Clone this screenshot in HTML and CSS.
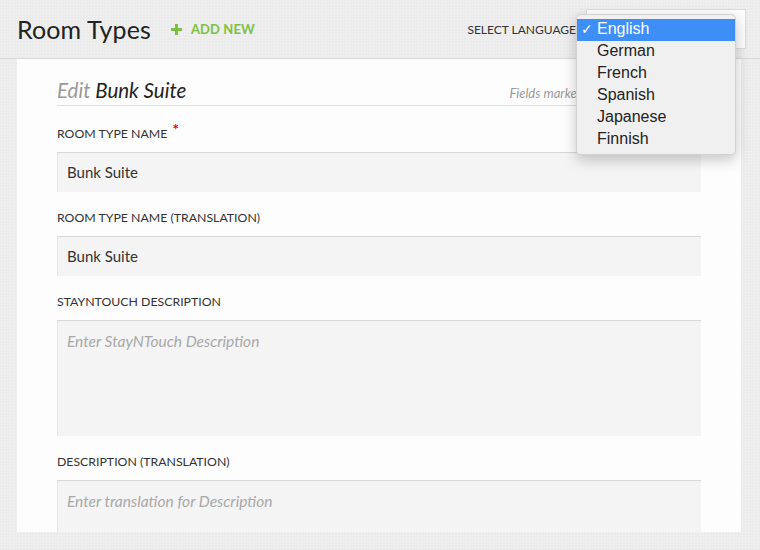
FILE: index.html
```html
<!DOCTYPE html>
<html>
<head>
<meta charset="utf-8">
<link rel="stylesheet" href="styles.css">
</head>
<body>
<div class="page">
  <header class="topbar">
    <h1 class="title">Room Types</h1>
    <a class="add-new">
      <svg class="plus" width="11" height="11" viewBox="0 0 11 11"><rect x="4" y="0" width="3" height="11" fill="#7cc142"/><rect x="0" y="4" width="11" height="3" fill="#7cc142"/></svg>
      <span>ADD NEW</span>
    </a>
    <div class="spacer"></div>
    <span class="lang-label">SELECT LANGUAGE</span>
    <div class="lang-select">
      <ul class="lang-menu">
        <li class="selected"><span class="check">✓</span>English</li>
        <li>German</li>
        <li>French</li>
        <li>Spanish</li>
        <li>Japanese</li>
        <li>Finnish</li>
      </ul>
    </div>
  </header>
  <main class="panel">
    <span class="tab-marker"></span>
    <div class="heading">
      <h2 class="heading-title"><span class="edit">Edit</span> Bunk Suite</h2>
      <span class="note">Fields marked with * are mandatory</span>
    </div>
    <div class="field">
      <label class="label">ROOM TYPE NAME <span class="req">*</span></label>
      <div class="input">Bunk Suite</div>
    </div>
    <div class="field">
      <label class="label">ROOM TYPE NAME (TRANSLATION)</label>
      <div class="input">Bunk Suite</div>
    </div>
    <div class="field">
      <label class="label">STAYNTOUCH DESCRIPTION</label>
      <div class="textarea placeholder">Enter StayNTouch Description</div>
    </div>
    <div class="field">
      <label class="label">DESCRIPTION (TRANSLATION)</label>
      <div class="textarea placeholder">Enter translation for Description</div>
    </div>
  </main>
</div>
</body>
</html>
```

FILE: styles.css
```css
html, body {
  margin: 0;
  padding: 0;
}
body {
  width: 760px;
  height: 550px;
  overflow: hidden;
  background-color: #ececec;
  background-image: radial-gradient(circle, #f5f5f5 0.8px, transparent 1px);
  background-size: 3px 3px;
  font-family: Lato, "Open Sans", sans-serif;
  color: #333;
}
.page {
  width: 760px;
}
.topbar {
  height: 58px;
  border-bottom: 1px solid #d9d9d9;
  display: flex;
  align-items: center;
  position: relative;
}
.title {
  margin: 0 0 0 17px;
  font-size: 25px;
  font-weight: 400;
  color: #222;
  letter-spacing: 0.1px;
}
.add-new {
  display: flex;
  align-items: center;
  margin-left: 20px;
  color: #7cc142;
  font-weight: 700;
  font-size: 13px;
  letter-spacing: 0.1px;
}
.plus {
  margin-right: 9px;
}
.spacer {
  flex: 1;
}
.lang-label {
  font-size: 12px;
  color: #333;
  margin-right: 10px;
}
.lang-select {
  width: 160px;
  height: 40px;
  box-sizing: border-box;
  background: #fdfdfd;
  border: 1px solid #dcdcdc;
  margin-right: 14px;
  position: relative;
}
.lang-menu {
  position: absolute;
  left: -11px;
  top: 4px;
  width: 160px;
  margin: 0;
  padding: 4px 0 3px;
  list-style: none;
  background: #f0f0f0;
  border: 1px solid rgba(0,0,0,0.12);
  border-radius: 5px;
  box-shadow: 0 5px 14px rgba(0,0,0,0.22);
  box-sizing: border-box;
  font-family: "Liberation Sans", Arial, sans-serif;
  font-size: 16px;
  color: #222;
  z-index: 10;
}
.lang-menu li {
  height: 22px;
  line-height: 20px;
  padding-left: 20px;
  position: relative;
}
.lang-menu li.selected {
  background: #3e8ef8;
  color: #fff;
}
.check {
  position: absolute;
  left: 4px;
  top: 0;
  font-family: "DejaVu Sans", sans-serif;
  font-size: 14px;
}
.panel {
  display: block;
  margin-left: 17px;
  width: 724px;
  height: 473px;
  box-sizing: border-box;
  background: #fdfdfd;
  padding: 18px 40px 0;
  overflow: hidden;
  position: relative;
}
.tab-marker {
  position: absolute;
  right: -5px;
  top: 0;
  width: 5px;
  height: 16px;
  background: #f5a900;
}
.heading {
  display: flex;
  justify-content: space-between;
  align-items: baseline;
  border-bottom: 1px solid #dedede;
  height: 28px;
}
.heading-title {
  margin: 0;
  font-size: 20.5px;
  line-height: 27px;
  font-weight: 400;
  font-style: italic;
  color: #222;
}
.edit {
  color: #9a9a9a;
}
.note {
  font-size: 13px;
  font-style: italic;
  color: #999;
}
.field {
  margin-top: 16px;
}
.heading + .field {
  margin-top: 18px;
}
.label {
  display: block;
  font-size: 12.3px;
  line-height: 20px;
  height: 20px;
  margin-bottom: 8px;
  color: #333;
}
.req {
  color: #e8000b;
  font-weight: 700;
  font-size: 15px;
  line-height: 0;
  position: relative;
  top: -3px;
  margin-left: 2px;
}
.input, .textarea {
  box-sizing: border-box;
  background: #f4f4f4;
  border-top: 1px solid #d8d8d8;
  border-left: 1px solid #e6e6e6;
  padding-left: 9px;
  font-size: 15px;
  color: #333;
}
.input {
  height: 40px;
  line-height: 38px;
}
.textarea {
  height: 116px;
  padding-top: 9px;
  line-height: 22px;
}
.placeholder {
  font-style: italic;
  font-size: 15.5px;
  color: #a8a8a8;
}
```
